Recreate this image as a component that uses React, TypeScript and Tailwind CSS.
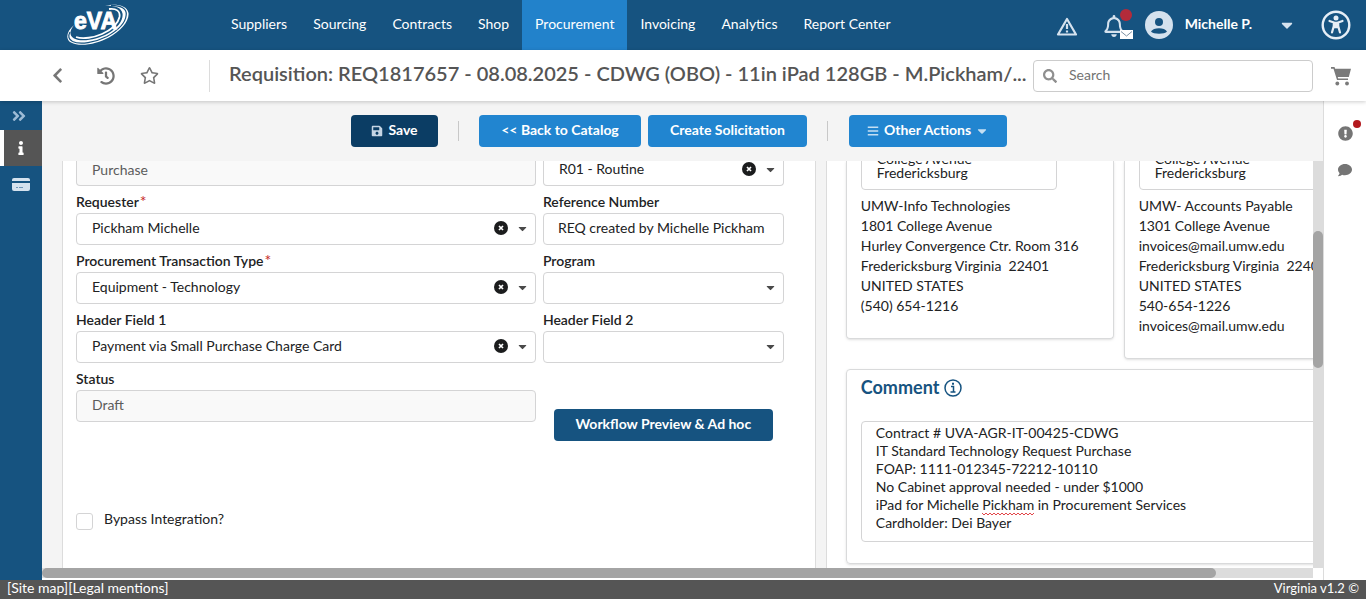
import React, { useId } from "react";
import {
  FaAngleDoubleRight,
  FaBars,
  FaCaretDown,
  FaChevronLeft,
  FaComment,
  FaExclamationCircle,
  FaHistory,
  FaInfo,
  FaRegBell,
  FaRegStar,
  FaSave,
  FaSearch,
} from "react-icons/fa";

const navItems = [
  "Suppliers",
  "Sourcing",
  "Contracts",
  "Shop",
  "Procurement",
  "Invoicing",
  "Analytics",
  "Report Center",
];

const shipTo = [
  "UMW-Info Technologies",
  "1801 College Avenue",
  "Hurley Convergence Ctr. Room 316",
  "Fredericksburg Virginia  22401",
  "UNITED STATES",
  "(540) 654-1216",
];

const billTo = [
  "UMW- Accounts Payable",
  "1301 College Avenue",
  "invoices@mail.umw.edu",
  "Fredericksburg Virginia  22401",
  "UNITED STATES",
  "540-654-1226",
  "invoices@mail.umw.edu",
];

const comment = `Contract # UVA-AGR-IT-00425-CDWG
IT Standard Technology Request Purchase
FOAP: 1111-012345-72212-10110
No Cabinet approval needed - under $1000
iPad for Michelle Pickham in Procurement Services
Cardholder: Dei Bayer`;

function Logo() {
  return (
    <svg viewBox="0 0 64 42" className="h-[42px] w-[64px]" role="img" aria-label="eVA">
      <path
        d="M39 1.5C50 -.5 61 1 62.5 9C63.5 17 55 27 43 33.5C31 40 14 43.5 5 38.5C-1 35 .5 27.5 8 21C3.500 27 3 31.5 8 34.5C16 38.5 31 35.5 42 29.5C52 24 57.5 16 56.5 9.5C55.500 3.500 49 1.500 39 1.500Z"
        fill="#fff"
      />
      <path
        d="M45 1.4C56 1.6 61 5 60.2 11C59.500 19 51 27 41 32.5C29 38.5 14 41 6.500 37.500C2.500 35.500 1.800 32 4 28"
        fill="none"
        stroke="#165380"
        strokeWidth="1.200"
      />
      <path
        d="M43 5C50 4 54.500 7 53.500 13C52 20 46 25.500 36 30C28 33.500 17 35.500 10 33"
        fill="none"
        stroke="#fff"
        strokeWidth="1.800"
      />
      <text
        x="8"
        y="25"
        fontSize="23"
        fontWeight="700"
        fontFamily="'Liberation Sans', sans-serif"
        fill="#fff"
        stroke="#fff"
        strokeWidth="0.900"
      >
        eVA
      </text>
    </svg>
  );
}

function ClearIcon() {
  return (
    <svg viewBox="0 0 14 14" className="size-[14px]" aria-hidden="true">
      <circle cx="7" cy="7" r="7" fill="#1b1c1d" />
      <path d="M5 5l4 4M9 5l-4 4" stroke="#fff" strokeWidth="1.700" />
    </svg>
  );
}

function Label({ htmlFor, text, required }: { htmlFor: string; text: string; required?: boolean }) {
  return (
    <label htmlFor={htmlFor} className="block h-[27px] pt-[6px] text-sm leading-5 font-semibold">
      {text}
      {required && <span className="pl-px text-base leading-4 font-normal text-[#c62828]">*</span>}
    </label>
  );
}

type FieldProps = {
  label?: string;
  name?: string;
  value?: string;
  required?: boolean;
  clipped?: boolean;
};

const box = "block w-full border border-[#d4d4d5] text-sm";
const cut = "h-[25px] rounded-b border-t-0 pb-2 leading-4";

function SelectField({ label, name, value = "", required, clipped }: FieldProps) {
  const id = useId();
  return (
    <div>
      {label && <Label htmlFor={id} text={label} required={required} />}
      <div className="relative">
        <select
          id={id}
          aria-label={name}
          defaultValue={value}
          className={`${box} ${clipped ? cut : "h-8 rounded pb-0.5 leading-5"} appearance-none bg-white pr-14 pl-[15px]`}
        >
          <option value={value}>{value}</option>
        </select>
        {value && (
          <button
            type="button"
            aria-label="Clear"
            className={`absolute right-7 ${clipped ? "top-px" : "top-2"}`}
          >
            <ClearIcon />
          </button>
        )}
        <FaCaretDown
          size={13}
          className={`pointer-events-none absolute right-[7px] text-[#4a4a4a] ${clipped ? "top-0.5" : "top-[9px]"}`}
        />
      </div>
    </div>
  );
}

function TextField({ label, name, value, clipped, readOnly }: FieldProps & { readOnly?: boolean }) {
  const id = useId();
  return (
    <div>
      {label && <Label htmlFor={id} text={label} />}
      <input
        id={id}
        aria-label={name}
        type="text"
        defaultValue={value}
        readOnly={readOnly}
        className={`${box} ${clipped ? cut : "h-8 rounded pb-1 leading-5"} ${readOnly ? "bg-[#f9f9f9] px-[15px] text-[#5c5c5c]" : "bg-white px-[14px]"}`}
      />
    </div>
  );
}

function AddressCard({ lines, name }: { lines: string[]; name: string }) {
  return (
    <section className="rounded-b border border-t-0 border-[#d9dadb] px-[14px] pb-[22px] shadow-sm">
      <div className="flex h-[29px] items-end overflow-hidden">
        <textarea
          aria-label={name}
          defaultValue={"College Avenue\nFredericksburg"}
          className="h-[60px] w-[196px] shrink-0 resize-none overflow-hidden rounded border border-[#d4d4d5] px-[15px] pt-[21px] text-sm leading-[14px]"
        />
      </div>
      <address className="pt-[6px] text-sm leading-5 whitespace-pre not-italic">
        {lines.map((l, i) => (
          <div key={i}>{l}</div>
        ))}
      </address>
    </section>
  );
}

function ActionButton({ children, className }: { children: React.ReactNode; className: string }) {
  return (
    <button
      type="button"
      className={`flex h-8 items-center justify-center rounded pb-0.5 text-sm font-bold text-white ${className}`}
    >
      {children}
    </button>
  );
}

export default function App() {
  return (
    <div className="flex h-screen flex-col overflow-hidden bg-white font-['Lato',sans-serif] text-[#212223]">
      <header className="flex h-[50px] shrink-0 bg-[#165380] text-sm text-white">
        <div className="flex w-[218px] shrink-0 items-center pl-[66px]">
          <Logo />
        </div>
        <nav className="flex">
          {navItems.map((item) => (
            <a
              key={item}
              href="#"
              className={`flex items-center px-[13px] pb-0.5 whitespace-nowrap ${item === "Procurement" ? "bg-[#2282cb]" : ""}`}
            >
              {item}
            </a>
          ))}
        </nav>
        <div className="ml-auto flex items-center pr-[15px]">
          <button type="button" aria-label="Alerts" className="mr-[25px] pt-1 text-[#d5e2ee]">
            <svg viewBox="0 0 22 20" className="h-5 w-[22px]" fill="none" stroke="currentColor">
              <path d="M11 2 L20 17.5 H2 Z" strokeWidth="2.200" strokeLinejoin="round" />
              <path d="M11 7v5M11 13.500v2" strokeWidth="2.200" />
            </svg>
          </button>
          <button type="button" aria-label="Notifications" className="relative mr-3 pt-0.5 pr-[10px] text-[#d5e2ee]">
            <FaRegBell size={22} className="-mr-0.5" />
            <span className="absolute -top-1 right-px size-3 rounded-full bg-[#b42b3a]" />
            <svg viewBox="0 0 13 9" className="absolute right-0 -bottom-0.5 h-[9px] w-[13px]">
              <path d="M0 0h13v9H0Z" fill="#fff" />
              <path d="M1 1.500 6.500 6 12 1.500" fill="none" stroke="#7d92a5" />
            </svg>
          </button>
          <svg viewBox="0 0 28 28" className="size-7 text-[#d5e2ee]" aria-hidden="true">
            <circle cx="14" cy="14" r="14" fill="currentColor" />
            <circle cx="14" cy="11" r="4" fill="#165380" />
            <path d="M6 20.500C8 16 20 16 22 20.500C20 23.500 8 23.500 6 20.500Z" fill="#165380" />
          </svg>
          <button type="button" className="flex items-center pl-3 font-bold">
            <span className="pb-0.5">Michelle P.</span>
            <FaCaretDown size={18} className="ml-[26px] text-[#d5e2ee]" />
          </button>
          <button type="button" aria-label="Accessibility" className="ml-[25px]">
            <svg viewBox="0 0 30 30" className="size-[30px]">
              <circle cx="15" cy="15" r="13.300" fill="none" stroke="#e6eef6" strokeWidth="2.400" />
              <circle cx="15" cy="8" r="2.500" fill="#e6eef6" />
              <path
                d="M8.500 11 12.800 12.500V16L11 22.500M21.500 11 17.200 12.500V16L19 22.500"
                fill="none"
                stroke="#e6eef6"
                strokeWidth="2.200"
                strokeLinecap="round"
                strokeLinejoin="round"
              />
              <path d="M12.300 11.800h5.400v6.400h-5.400Z" fill="#e6eef6" />
            </svg>
          </button>
        </div>
      </header>

      <div className="relative z-10 flex h-[51px] shrink-0 items-center bg-white shadow-[0_1px_4px_rgba(0,0,0,0.2)]">
        <div className="flex h-8 w-[210px] shrink-0 items-center border-r border-[#dcdcdc] text-[#767676]">
          <button type="button" aria-label="Back" className="pl-[49px]">
            <FaChevronLeft size={17} />
          </button>
          <button type="button" aria-label="History" className="pl-[31px]">
            <FaHistory size={18} />
          </button>
          <button type="button" aria-label="Favorite" className="pl-[25px]">
            <FaRegStar size={19} />
          </button>
        </div>
        <h1 className="min-w-0 flex-1 truncate pb-1.5 pl-[19px] text-xl font-semibold text-[#555]">
          Requisition: REQ1817657 - 08.08.2025 - CDWG (OBO) - 11in iPad 128GB - M.Pickham/...
        </h1>
        <div className="relative w-[280px] shrink-0">
          <FaSearch size={14} className="pointer-events-none absolute top-[9px] left-[10px] text-[#8f8f8f]" />
          <input
            type="search"
            aria-label="Search"
            placeholder="Search"
            className="block h-8 w-full rounded border border-[#ccc] pb-0.5 pl-[35px] text-sm placeholder:text-[#737373]"
          />
        </div>
        <button type="button" aria-label="Cart" className="pr-[15px] pl-[18px] text-[#7a7a7a]">
          <svg viewBox="0 0 20 19" className="mt-0.5 h-[19px] w-5" fill="currentColor">
            <path d="M0 0h3.500l.7 1.800H20L17.800 10H6.700l.5 1.500H17V13H6L2.500 1.700H0Z" />
            <circle cx="6.300" cy="16.500" r="1.900" />
            <circle cx="16" cy="16.500" r="1.900" />
          </svg>
        </button>
      </div>

      <div className="flex min-h-0 flex-1">
        <aside className="flex w-[42px] shrink-0 flex-col bg-[#165380]">
          <button type="button" aria-label="Expand" className="flex h-[29px] items-center justify-center pr-1 text-[#9dbbd6]">
            <FaAngleDoubleRight size={16} />
          </button>
          <button
            type="button"
            aria-label="Information"
            className="flex h-9 items-center justify-center border-l-4 border-white bg-[#555] pr-1 text-white"
          >
            <FaInfo size={14} />
          </button>
          <button type="button" aria-label="Payment" className="flex h-9 items-center justify-center text-[#d5e2ee]">
            <svg viewBox="0 0 18 13" className="h-[13px] w-[18px]" fill="currentColor">
              <path d="M2 0h14q2 0 2 2v1H0V2q0-2 2-2Z" />
              <path d="M0 5h18v6q0 2-2 2H2q-2 0-2-2Z" />
              <path d="M4 9.500h2M7 9.500h4" stroke="#6f96b8" />
            </svg>
          </button>
        </aside>

        <main className="flex min-w-0 flex-1 flex-col bg-[#f4f4f4]">
          <div className="flex h-[60px] shrink-0 items-center justify-center pr-[7px]">
            <ActionButton className="w-[87px] bg-[#0b3d64]">
              <FaSave size={12} className="mt-0.5 mr-[5px] text-[#c5d5e4]" />
              Save
            </ActionButton>
            <span className="mx-5 h-5 w-px bg-[#c8c8c8]" />
            <ActionButton className="w-[162px] bg-[#2185d0]">&lt;&lt; Back to Catalog</ActionButton>
            <ActionButton className="ml-[7px] w-[159px] bg-[#2185d0]">Create Solicitation</ActionButton>
            <span className="mr-[21px] ml-5 h-5 w-px bg-[#c8c8c8]" />
            <ActionButton className="w-[158px] bg-[#2185d0]">
              <FaBars size={12} className="mt-0.5 mr-[5px] text-[#c5dff3]" />
              Other Actions
              <FaCaretDown size={14} className="mt-0.5 ml-1 text-[#c5dff3]" />
            </ActionButton>
          </div>

          <div className="flex min-h-0 flex-1">
            <div className="flex min-w-0 flex-1 flex-col">
              <div className="flex min-h-0 flex-1 overflow-hidden">
                <div className="grid w-[108%] shrink-0 grid-cols-[754fr_586fr] gap-[10px] pr-[3px] pl-5">
                  <form className="border-x border-[#dcdcdc] bg-white pr-[31px] pl-[13px]">
                    <div className="grid grid-cols-[460fr_241fr] gap-x-[7px]">
                      <TextField name="Type" value="Purchase" clipped readOnly />
                      <SelectField name="Priority" value="R01 - Routine" clipped />
                      <SelectField label="Requester" value="Pickham Michelle" required />
                      <TextField label="Reference Number" value="REQ created by Michelle Pickham" />
                      <SelectField label="Procurement Transaction Type" value="Equipment - Technology" required />
                      <SelectField label="Program" />
                      <SelectField label="Header Field 1" value="Payment via Small Purchase Charge Card" />
                      <SelectField label="Header Field 2" />
                      <TextField label="Status" value="Draft" readOnly />
                      <div className="flex justify-center pt-[46px]">
                        <ActionButton className="w-[219px] bg-[#165380]">Workflow Preview &amp; Ad hoc</ActionButton>
                      </div>
                    </div>
                    <div className="flex items-start pt-[68px]">
                      <input
                        id="bypass"
                        type="checkbox"
                        className="mt-1 size-[17px] appearance-none rounded-[3px] border border-[#d4d4d5] bg-white"
                      />
                      <label htmlFor="bypass" className="pl-[11px] text-sm leading-5">
                        Bypass Integration?
                      </label>
                    </div>
                  </form>

                  <div className="border-x border-[#dcdcdc] bg-white px-[19px]">
                    <div className="grid grid-cols-2 items-start gap-[10px]">
                      <AddressCard lines={shipTo} name="Delivery address" />
                      <AddressCard lines={billTo} name="Billing address" />
                    </div>
                    <section className="mt-[10px] rounded border border-[#d9dadb] px-[14px] pb-[21px] shadow-sm">
                      <h2 className="flex h-[51px] items-start gap-[5px] pt-[5px] text-lg leading-6 font-bold text-[#165380]">
                        <label htmlFor="comment">Comment</label>
                        <svg viewBox="0 0 18 18" className="mt-1 size-[18px]" fill="none" stroke="currentColor" aria-hidden="true">
                          <circle cx="9" cy="9" r="8" strokeWidth="1.500" />
                          <path d="M7 7.500h2.500v5M6.500 13h5" strokeWidth="1.500" />
                          <path d="M8 4.700h2" strokeWidth="2" />
                        </svg>
                      </h2>
                      <div className="relative">
                        <textarea
                          id="comment"
                          spellCheck={false}
                          defaultValue={comment}
                          className="block h-[121px] w-full resize-none overflow-hidden rounded border border-[#d4d4d5] px-[14px] pt-0.5 text-sm leading-[18px]"
                        />
                        <svg
                          viewBox="0 0 52 4"
                          className="pointer-events-none absolute top-[91px] left-[121px] h-1 w-[52px]"
                          fill="none"
                          stroke="#e2464a"
                          aria-hidden="true"
                        >
                          <path d="M0 1l2 2 2-2 2 2 2-2 2 2 2-2 2 2 2-2 2 2 2-2 2 2 2-2 2 2 2-2 2 2 2-2 2 2 2-2 2 2 2-2 2 2 2-2 2 2 2-2 2 2 2-2" />
                        </svg>
                      </div>
                    </section>
                  </div>
                </div>
              </div>
              <div className="h-[10px] shrink-0 bg-[#dcdcdc]">
                <div className="h-full w-[92.4%] rounded-full bg-[#a4a4a4]" />
              </div>
              <div className="h-0.5 shrink-0 bg-white" />
            </div>
            <div className="flex w-[10px] shrink-0 flex-col bg-white pb-3">
              <div className="flex-1 bg-[#dcdcdc] pt-[70px]">
                <div className="h-[137px] rounded-full bg-[#a4a4a4]" />
              </div>
            </div>
          </div>
        </main>

        <aside className="flex w-[43px] shrink-0 flex-col items-center gap-[22px] border-l border-[#dcdcdc] bg-white pt-[25px] text-[#757575]">
          <button type="button" aria-label="Errors" className="relative">
            <FaExclamationCircle size={15} />
            <span className="absolute -top-[6px] -right-2 size-2 rounded-full bg-[#b3191e]" />
          </button>
          <button type="button" aria-label="Messages">
            <FaComment size={14} />
          </button>
        </aside>
      </div>

      <footer className="flex h-[19px] shrink-0 items-center justify-between bg-[#555] px-[7px] pb-1 text-sm leading-4 text-white">
        <div>
          <a href="#">[Site map]</a>
          <a href="#">[Legal mentions]</a>
        </div>
        <span className="text-[13px]">Virginia v1.2 ©</span>
      </footer>
    </div>
  );
}
